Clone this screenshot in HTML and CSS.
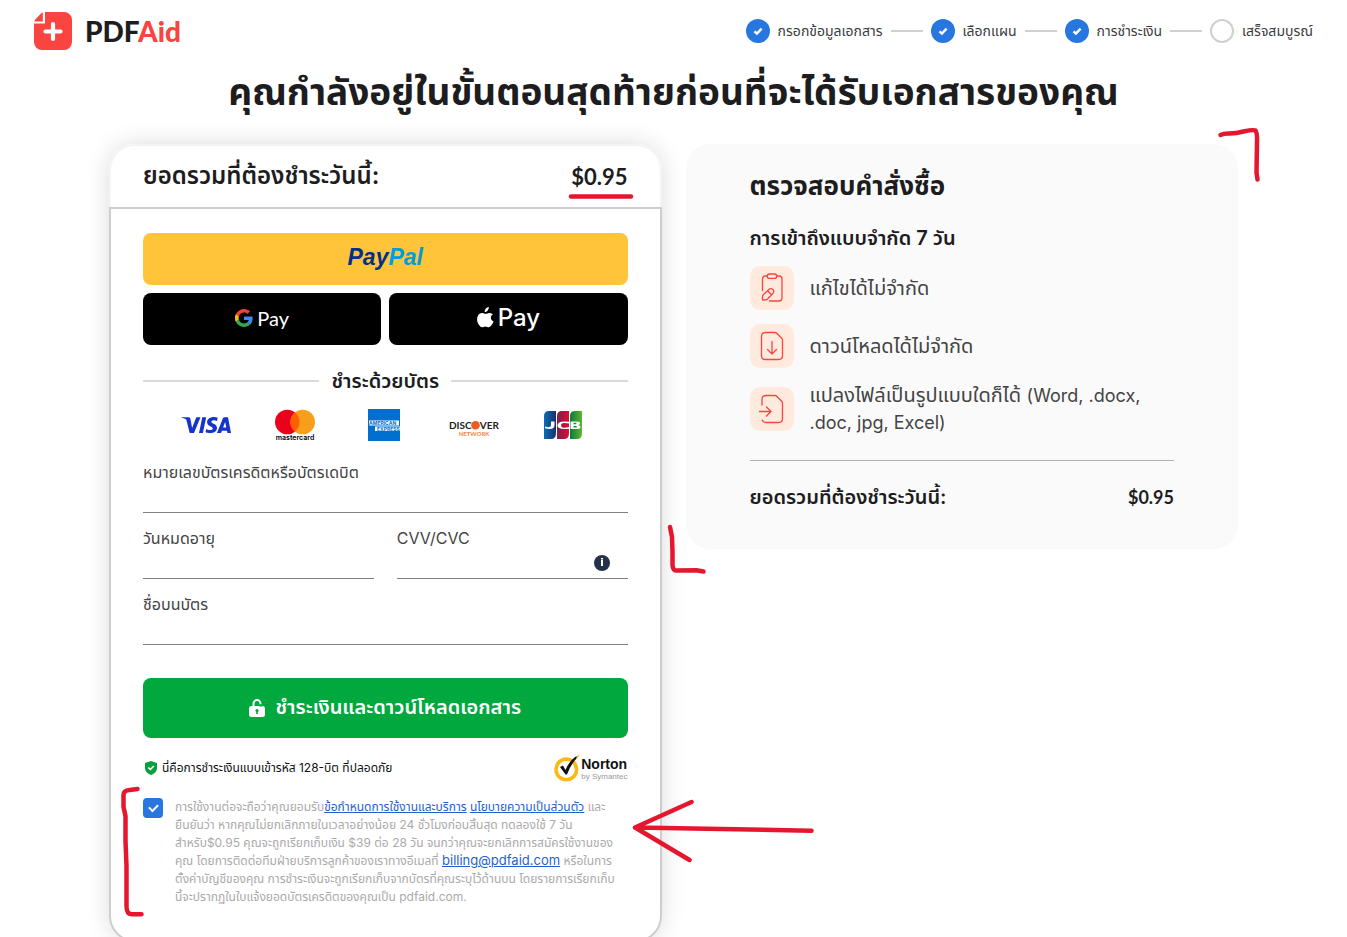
FILE: index.html
```html
<!DOCTYPE html>
<html lang="th">
<head>
<meta charset="utf-8">
<meta name="viewport" content="width=device-width, initial-scale=1">
<title>PDFAid</title>
<link rel="stylesheet" href="styles.css">
</head>
<body>
<div class="page">
  <header class="topbar">
    <a class="brand" href="#">
      <svg class="brand-mark" viewBox="0 0 38 38" aria-hidden="true">
        <path fill="#fa4440" d="M11 11.500H0V30a8 8 0 0 0 8 8h22a8 8 0 0 0 8-8V8a8 8 0 0 0-8-8H11z"/>
        <path fill="#fa4440" d="M8.800 0.500V9.500H0.300Q0.300 8.500 1.500 7.300L7 1.600Q8 .5 8.800.500z"/>
        <path stroke="#fff" stroke-width="4.200" stroke-linecap="round" d="M19 12v15M11.500 19.500h15"/>
      </svg>
      <span class="brand-name">PDF<b>Aid</b></span>
    </a>
    <ol class="steps">
      <li class="step"><span class="dot done"><svg viewBox="0 0 24 24" aria-hidden="true"><path d="M8.500 12.300l2.400 2.300 4.700-5"/></svg></span>กรอกข้อมูลเอกสาร</li>
      <li class="step"><span class="dot done"><svg viewBox="0 0 24 24" aria-hidden="true"><path d="M8.500 12.300l2.400 2.300 4.700-5"/></svg></span>เลือกแผน</li>
      <li class="step"><span class="dot done"><svg viewBox="0 0 24 24" aria-hidden="true"><path d="M8.500 12.300l2.400 2.300 4.700-5"/></svg></span>การชำระเงิน</li>
      <li class="step"><span class="dot"></span>เสร็จสมบูรณ์</li>
    </ol>
  </header>

  <h1 class="title">คุณกำลังอยู่ในขั้นตอนสุดท้ายก่อนที่จะได้รับเอกสารของคุณ</h1>

  <main class="columns">
    <form class="pay-card">
      <div class="pay-head"><span>ยอดรวมที่ต้องชำระวันนี้:</span><span class="amount">$0.95</span></div>
      <div class="pay-body">
        <div class="wallets">
          <button type="button" class="wallet paypal"><i>Pay</i><i class="pal">Pal</i></button>
          <button type="button" class="wallet">
            <svg class="google" viewBox="0 0 48 48" aria-hidden="true">
              <path fill="#ea4335" d="M24 9.500c3.500 0 6.700 1.200 9.200 3.600l6.900-6.900C35.900 2.400 30.500 0 24 0 14.600 0 6.500 5.400 2.600 13.200l8 6.200C12.400 13.700 17.700 9.500 24 9.500z"/>
              <path fill="#4285f4" d="M47 24.600c0-1.600-.2-3.100-.4-4.600H24v9h12.900c-.6 3-2.200 5.500-4.700 7.200l7.700 6C44.400 38 47 31.800 47 24.600z"/>
              <path fill="#fbbc05" d="M10.500 28.600a14.500 14.500 0 0 1 0-9.200l-8-6.200a24 24 0 0 0 0 21.600z"/>
              <path fill="#34a853" d="M24 48c6.500 0 11.900-2.100 15.900-5.800l-7.700-6c-2.200 1.500-4.900 2.300-8.200 2.300-6.300 0-11.600-4.200-13.500-9.900l-8 6.200C6.500 42.600 14.600 48 24 48z"/>
            </svg><span class="gpay">Pay</span>
          </button>
          <button type="button" class="wallet">
            <svg class="apple" viewBox="0 0 17 21" aria-hidden="true"><path fill="#fff" d="M11.800 0c.2 1.300-.3 2.500-1.100 3.400-.8 1-1.900 1.600-3 1.500-.1-1.200.4-2.400 1.100-3.300C9.600.7 10.800.1 11.800 0zM15.900 7.300c-1.300.8-2 1.900-2 3.400 0 1.700 1 3.100 2.600 3.700-.3 1.100-.9 2.200-1.600 3.200-.8 1.200-1.700 2.600-3.100 2.600s-1.800-.8-3.400-.8-2.100.8-3.400.8-2.300-1.200-3.300-2.700C-.1 14.900-.5 11 1 8.500 1.900 6.900 3.300 6 4.800 6c1.600 0 2.500.8 3.800.8S10.700 5.900 12.400 5.900c1.300 0 2.600.6 3.500 1.400z"/></svg><span class="apay">Pay</span>
          </button>
        </div>

        <div class="divider"><span>ชำระด้วยบัตร</span></div>

        <div class="brands">
          <svg viewBox="0 0 50 32" width="50" height="32" role="img" aria-label="Visa"><path fill="#1434cb" d="M19.500 8.200L13 24H8.700L5.500 11.500C5.300 10.700 5.100 10.400 4.500 10 3.500 9.500 2 9 .6 8.700L.7 8.200h6.900c.9 0 1.600.6 1.800 1.600l1.700 9.200 4.200-10.800zM36 18.900c0-4.200-5.700-4.400-5.700-6.200 0-.6.600-1.200 1.700-1.300.6-.1 2.200-.1 4 .7l.7-3.400C35.800 8.300 34.500 8 32.900 8c-4 0-6.800 2.200-6.800 5.200 0 2.300 2 3.500 3.500 4.300 1.600.8 2.100 1.300 2.100 1.900 0 1-1.200 1.500-2.400 1.500-2 0-3.200-.5-4.100-1l-.7 3.400c.9.400 2.700.8 4.500.8 4.200 0 7-2.100 7-5.200M46.500 24H50L47 8.200h-3.400c-.8 0-1.400.4-1.700 1.100L36 24h4.100l.8-2.300H46zm-4.400-5.400l2-5.700 1.200 5.700zM25.200 8.200L21.900 24H18l3.300-15.800z"/></svg>
          <svg viewBox="0 0 40 32" width="40" height="32" role="img" aria-label="Mastercard"><circle cx="12.300" cy="13" r="12.300" fill="#eb001b"/><circle cx="27.700" cy="13" r="12.300" fill="#f79e1b"/><path fill="#ff5f00" d="M20 3.400a12.300 12.300 0 0 1 0 19.200 12.300 12.300 0 0 1 0-19.200z"/><text class="mc" x="20" y="31" text-anchor="middle">mastercard</text></svg>
          <svg viewBox="0 0 32 32" width="32" height="32" role="img" aria-label="American Express"><path fill="#006fcf" d="M0 0h32v32H0z"/><path fill="#fff" d="M1 11.500h30v5H1zM7 17.500h25v4.500H7z"/><text class="ax" x="1" y="16">AMERICAN</text><text class="ax" x="9" y="21.500">EXPRESS</text></svg>
          <svg viewBox="0 0 50 32" width="50" height="32" role="img" aria-label="Discover"><text class="dc" x="0" y="20">DISC</text><circle cx="26.500" cy="16.200" r="4.300" fill="#f15a22"/><text class="dc" x="50" y="20" text-anchor="end">VER</text><text class="dn" x="25" y="27" text-anchor="middle">NETWORK</text></svg>
          <svg viewBox="0 0 38 32" width="38" height="32" role="img" aria-label="JCB">
            <defs>
              <linearGradient id="jb"><stop stop-color="#0d6db5"/><stop offset="1" stop-color="#17306f"/></linearGradient>
              <linearGradient id="jr"><stop stop-color="#74244c"/><stop offset="1" stop-color="#e10b38"/></linearGradient>
              <linearGradient id="jg"><stop stop-color="#087b3d"/><stop offset="1" stop-color="#5eb52f"/></linearGradient>
            </defs>
            <path fill="url(#jb)" d="M5 2h7v22q0 6-5 6H0V7q0-5 5-5z"/><path fill="url(#jr)" d="M18 2h7v22q0 6-5 6h-7V7q0-5 5-5z"/><path fill="url(#jg)" d="M31 2h7v22q0 6-5 6h-7V7q0-5 5-5z"/>
            <path fill="#fff" d="M1 17.500q3 1 4.500.6 1.500-.5 1.500-2V12.500h3.500V16q0 4-4.500 4-3 0-5-.8zM25 14.500q-4.500-1-6.500-.3-1.500.6-1.500 2.100t1.500 2.100q2 .6 6.500-.4v1.700q-11.500 1.400-11.500-3.400 0-5 11.500-3.600zM26.500 12.500h6.500q3 0 3 1.800 0 1.400-2 1.800 2.500.3 2.500 2 0 1.900-3 1.900h-7z"/>
            <path fill="#23883c" d="M29.500 13.800h2.800v1.400h-2.800zM29.500 17h3.200v1.600h-3.200z"/>
          </svg>
        </div>

        <div class="fields">
          <div class="field wide"><label for="number">หมายเลขบัตรเครดิตหรือบัตรเดบิต</label><input id="number" type="text"></div>
          <div class="field"><label for="expiry">วันหมดอายุ</label><input id="expiry" type="text"></div>
          <div class="field"><label for="cvv">CVV/CVC</label><input id="cvv" type="text">
            <svg class="info" viewBox="0 0 16 16" aria-hidden="true"><circle cx="8" cy="8" r="8" fill="#25324b"/><path fill="#fff" d="M7 3h2v1.500H7zM7 5h2v6H7z"/></svg></div>
          <div class="field wide"><label for="holder">ชื่อบนบัตร</label><input id="holder" type="text"></div>
        </div>

        <button type="submit" class="submit">
          <svg viewBox="0 0 16 18" width="16" height="18" aria-hidden="true"><path fill="none" stroke="#fff" stroke-width="2" d="M4.500 8V4.600a3.500 3.500 0 0 1 7 0v1"/><rect y="7" width="16" height="11" rx="2.500" fill="#fff"/><path stroke="#00a83e" stroke-width="2" d="M10.300 6.500h3"/><circle cx="8" cy="11.500" r="1.600" fill="#00a83e"/><path stroke="#00a83e" stroke-width="1.600" d="M8 11v4"/></svg>
          <span>ชำระเงินและดาวน์โหลดเอกสาร</span>
        </button>

        <div class="secure">
          <svg viewBox="0 0 12 14" width="12" height="14" aria-hidden="true"><path fill="#0a9f3f" d="M6 0l6 2v5c0 3.500-3 6-6 7-3-1-6-3.500-6-7V2z"/><path fill="none" stroke="#fff" stroke-width="1.600" d="M3.300 6.500l2 2L8.900 5"/></svg>
          <span>นี่คือการชำระเงินแบบเข้ารหัส 128-บิต ที่ปลอดภัย</span>
          <span class="norton">
            <svg viewBox="0 0 26 28" width="26" height="28" aria-hidden="true"><circle cx="12.300" cy="15.400" r="10.300" fill="none" stroke="#fdb913" stroke-width="3.600"/><path fill="#111" d="M6 13l3-1.500 2.500 4.500Q15 7.500 21 3l2.500-1-1 2.500Q17 10 13 20.500h-1.500z"/><path fill="#fdb913" d="M22 3l3.800-3-2.300 4.500z"/></svg>
            <span class="norton-text"><b>Norton</b><small>by Symantec</small></span>
          </span>
        </div>

        <div class="consent">
          <input id="agree" type="checkbox" checked>
          <label for="agree">การใช้งานต่อจะถือว่าคุณยอมรับ<a href="#">ข้อกำหนดการใช้งานและบริการ</a> <a href="#">นโยบายความเป็นส่วนตัว</a> และ<br>ยืนยันว่า หากคุณไม่ยกเลิกภายในเวลาอย่างน้อย 24 ชั่วโมงก่อนสิ้นสุด ทดลองใช้ 7 วัน<br>สำหรับ$0.95 คุณจะถูกเรียกเก็บเงิน $39 ต่อ 28 วัน จนกว่าคุณจะยกเลิกการสมัครใช้งานของ<br>คุณ โดยการติดต่อทีมฝ่ายบริการลูกค้าของเราทางอีเมลที่ <a class="mail" href="#">billing@pdfaid.com</a> หรือในการ<br>ตั้งค่าบัญชีของคุณ การชำระเงินจะถูกเรียกเก็บจากบัตรที่คุณระบุไว้ด้านบน โดยรายการเรียกเก็บ<br>นี้จะปรากฏในใบแจ้งยอดบัตรเครดิตของคุณเป็น pdfaid.com.</label>
        </div>
      </div>
    </form>

    <aside class="order">
      <h2>ตรวจสอบคำสั่งซื้อ</h2>
      <h3>การเข้าถึงแบบจำกัด 7 วัน</h3>
      <ul>
        <li><svg viewBox="0 0 44 44" aria-hidden="true"><path d="M17 10h-1.500q-3 0-3 3v11.500M27 10h2q3 0 3 3v19q0 3-3 3h-9.500M19.500 8h5q2.200 0 2.200 2.200t-2.200 2.200h-5q-2.200 0-2.200-2.200T19.500 8zM13.300 28.800l5.800-5.500q1.800-1.500 3.700.2t.2 3.700l-5.500 5.800q-.8.800-2 .9l-2 .1q-1.200 0-1.100-1.200l.1-2q0-1.200.8-2zM17.800 25l3.500 3.500"/></svg><span>แก้ไขได้ไม่จำกัด</span></li>
        <li><svg viewBox="0 0 44 44" aria-hidden="true"><path d="M15.500 8.500H25q1 0 1.700.7l5 5q.8.800.8 1.800v15.500q0 4-4 4h-13q-4 0-4-4v-19q0-4 4-4zM22 17.500V30M17.500 25.500L22 30l4.500-4.500"/></svg><span>ดาวน์โหลดได้ไม่จำกัด</span></li>
        <li><svg viewBox="0 0 44 44" aria-hidden="true"><path d="M12 18v-5.500q0-4 4-4h9q1 0 1.700.7l5 5q.8.800.8 1.800v15.500q0 4-4 4H16q-2.800 0-3.700-2.300M9.500 24.500H21M16.500 20l4.500 4.500-4.500 4.500"/></svg><span>แปลงไฟล์เป็นรูปแบบใดก็ได้ <span class="latin">(Word, .docx,<br>.doc, jpg, Excel)</span></span></li>
      </ul>
      <div class="total"><span>ยอดรวมที่ต้องชำระวันนี้:</span><span class="amount">$0.95</span></div>
    </aside>
  </main>

  <svg class="marks" viewBox="1 0 1347 937" width="1347" height="937" aria-hidden="true">
    <path d="M1221 135q4-2 9-1.500 7 0 14-2 10-2 12-1 2 3 1.500 12l-.5 30 1 7"/>
    <path d="M571.500 196.500h60"/>
    <path d="M670.500 527l2 10 .5 15v13q.5 6 4 5.500l20-.2 7 1.200"/>
    <path d="M138 789l-8 1q-6 .5-6 5v12l2 9v25l1 25v40q0 8 5 8.200h10"/>
    <path d="M636 827.500l176 3.200M692 802l-56.500 25.500L690 860"/>
  </svg>
</div>
</body>
</html>
```
FILE: styles.css
```css
* { box-sizing: border-box; }
html { overflow-x: hidden; }
body {
  margin: 0;
  background: #fff;
  color: #1d1d1f;
  font-family: Inter, "Noto Sans Thai", "Noto Sans", sans-serif;
}
h1, h2, h3, ul, ol { margin: 0; padding: 0; }
ul, ol { list-style: none; }
button, input { font: inherit; }

.page { position: relative; }
.topbar {
  display: flex;
  justify-content: space-between;
  align-items: center;
  flex-wrap: wrap;
  padding: 12px 34px;
}
.brand { display: flex; align-items: center; gap: 13px; text-decoration: none; color: #1d1d1f; }
.brand-mark { width: 38px; height: 38px; }
.brand-name { font: 900 28px/38px Lato, sans-serif; }
.brand-name b { color: #fa4440; font-weight: 900; }

.steps { display: flex; flex-wrap: wrap; gap: 8px; }
.step { display: flex; align-items: center; gap: 8px; font-size: 14px; line-height: 24px; color: #3c3c3e; }
.step:not(:last-child)::after { content: ""; width: 32px; height: 2px; background: #d0d0d0; }
.dot { width: 24px; height: 24px; border-radius: 50%; border: 2px solid #d0d0d0; display: block; }
.dot.done { border: 0; background: #2777df; }
.dot svg { display: block; fill: none; stroke: #fff; stroke-width: 2.4; }

.title { text-align: center; font-size: 37px; line-height: 48px; font-weight: 700; padding: 6px 24px 0; }

.columns { display: flex; flex-wrap: wrap; align-items: flex-start; gap: 24px; max-width: 1129px; margin: 0 auto; padding-top: 28px; }
.pay-card { flex: 1 1 400px; border-radius: 26px; box-shadow: 0 0 24px rgba(0, 0, 0, 0.14); }
.pay-head {
  display: flex;
  justify-content: space-between;
  align-items: center;
  height: 63px;
  padding: 0 32px;
  border: 2px solid #f4f4f4;
  border-bottom: 0;
  border-radius: 26px 26px 0 0;
  font-size: 24px;
  font-weight: 600;
}
.amount { font-family: Lato, sans-serif; font-weight: 700; }
.pay-head .amount { font-size: 22px; }
.total .amount { font-size: 18px; }
.pay-body { padding: 24px 32px 34px; border: 2px solid #cdcdcd; border-radius: 0 0 26px 26px; }

.wallets { display: grid; grid-template-columns: 1fr 1fr; gap: 8px; }
.wallet {
  display: flex;
  align-items: center;
  justify-content: center;
  height: 52px;
  padding: 0 0 3px;
  border: 0;
  border-radius: 8px;
  background: #000;
  color: #fff;
}
.paypal { grid-column: 1 / -1; background: #ffc439; color: #003087; font: italic 700 23px "Liberation Sans", sans-serif; }
.pal { color: #009cde; }
.google { width: 18px; height: 18px; margin-right: 4px; }
.gpay { font: 400 20px Lato, sans-serif; }
.apple { width: 17px; height: 21px; margin-right: 4px; }
.apay { font: 500 24px Inter, sans-serif; }

.divider { display: flex; align-items: center; gap: 12px; margin-top: 24px; font-size: 20px; line-height: 24px; font-weight: 600; }
.divider::before, .divider::after { content: ""; flex: 1; height: 2px; background: #dadada; }

.brands { display: grid; grid-template-columns: repeat(5, 1fr); justify-items: center; margin: 16px 0 20px; padding: 0 20px 0 18px; }
.mc { font: 600 7px Inter, sans-serif; }
.ax { font: 700 5px Inter, sans-serif; fill: #006fcf; }
.dc { font: 700 10px Lato, sans-serif; fill: #222; }
.dn { font: 700 6px Lato, sans-serif; fill: #f58345; }

.fields { display: grid; grid-template-columns: 1fr 1fr; gap: 14px 23px; }
.wide { grid-column: 1 / -1; }
.field { position: relative; color: #444; font-size: 16px; line-height: 22px; }
.field label { display: block; height: 24px; }
.field input { display: block; width: 100%; height: 28px; padding: 0; border: 0; border-bottom: 1px solid #808080; background: transparent; }
.info { position: absolute; right: 18px; bottom: 8px; width: 16px; height: 16px; }

.submit {
  display: flex;
  align-items: center;
  justify-content: center;
  gap: 10px;
  width: 100%;
  height: 60px;
  margin-top: 33px;
  border: 0;
  border-radius: 8px;
  background: #00a83e;
  color: #fff;
  font-size: 20px;
  font-weight: 600;
}
.secure { display: flex; align-items: center; gap: 5px; margin: 16px 0; padding-left: 2px; font-size: 12px; line-height: 28px; color: #111; }
.norton { display: flex; align-items: center; gap: 1px; margin-left: auto; font-family: "Liberation Sans", sans-serif; }
.norton-text { display: grid; padding-top: 2px; }
.norton b { font-size: 14px; line-height: 16px; }
.norton small { font-size: 8px; line-height: 10px; color: #999; }

.consent { display: flex; align-items: flex-start; gap: 12px; }
.consent label { font-size: 12px; line-height: 18px; color: #aaa; white-space: nowrap; }
.consent a { color: #1f5fd0; }
.consent .mail { font-size: 13px; line-height: 16px; }
.consent input {
  appearance: none;
  flex: none;
  width: 20px;
  height: 20px;
  margin: 0;
  border-radius: 4px;
  background: #2777df;
  display: grid;
  place-items: center;
}
.consent input:checked::after { content: ""; width: 7px; height: 4px; margin-bottom: 3px; border: solid #fff; border-width: 0 0 2px 2px; transform: rotate(-45deg); }

.order { flex: 1 1 400px; padding: 26px 64px 40px; border-radius: 24px; background: #fafafa; }
.order h2 { font-size: 26px; line-height: 32px; font-weight: 700; }
.order h3 { margin: 22px 0 14px; font-size: 20px; line-height: 28px; font-weight: 600; }
.order ul { display: grid; gap: 14px; padding-bottom: 24px; border-bottom: 1px solid #b0b0b0; }
.order li { display: flex; align-items: center; gap: 16px; font-size: 20px; line-height: 27px; color: #444; }
.latin { font-size: 18px; }
.order li svg { flex: none; width: 44px; height: 44px; border-radius: 10px; background: #ffeadd; fill: none; stroke: #fa4440; stroke-width: 1.3; stroke-linecap: round; stroke-linejoin: round; }
.total { display: flex; justify-content: space-between; margin-top: 24px; font-size: 20px; line-height: 24px; font-weight: 600; }

.marks { position: absolute; top: 0; left: 50%; transform: translateX(-50%); pointer-events: none; fill: none; stroke: #e5172f; stroke-width: 4.5; stroke-linecap: round; stroke-linejoin: round; }
```
